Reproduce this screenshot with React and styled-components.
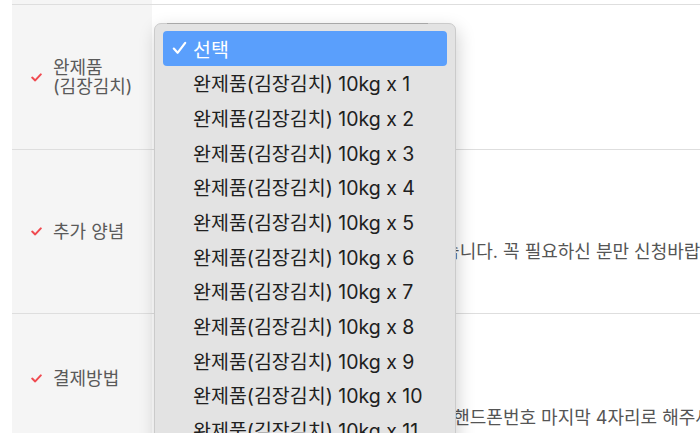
import React from "react";
import styled, { createGlobalStyle } from "styled-components";

const Global = createGlobalStyle`
  html, body { margin: 0; padding: 0; background: #fff; }
  body { font-family: Inter, "Noto Sans CJK KR", "Noto Sans", sans-serif; overflow: hidden; }
`;

const Page = styled.div`
  position: relative;
  width: 700px;
  height: 433px;
  overflow: hidden;
  padding-left: 12px;
  box-sizing: border-box;
`;

const Table = styled.div`
  display: flex;
  flex-direction: column;
`;

const Row = styled.div`
  display: grid;
  grid-template-columns: 140px 1fr;
  min-height: ${(p) => p.$h}px;
  border-bottom: 1px solid #dedede;
`;

const Label = styled.div`
  background: #f5f5f5;
  display: flex;
  align-items: center;
  gap: 11px;
  padding-left: 19px;
  font-size: 18px;
  line-height: 19px;
  color: #5a5a5a;
`;

const Content = styled.div`
  display: flex;
  flex-direction: column;
  gap: 8px;
  padding: ${(p) => p.$pt}px 16px 0 16px;
  white-space: nowrap;
`;

const SelectBox = styled.div`
  height: 34px;
  width: 280px;
  border: 1px solid #ccc;
  border-radius: 4px;
  box-sizing: border-box;
`;

const Note = styled.div`
  font-size: 18px;
  line-height: 24px;
  color: #555;
`;

const Popup = styled.div`
  position: absolute;
  left: 154px;
  top: 23px;
  width: 302px;
  height: 440px;
  box-sizing: border-box;
  background: #e3e3e3;
  border: 1px solid #cbcbcb;
  border-radius: 7px;
  box-shadow: 2px 6px 18px rgba(0, 0, 0, 0.18);
  padding: 7px 8px;
  &::before {
    content: "";
    position: absolute;
    left: 12px;
    right: 27px;
    top: -1px;
    height: 1px;
    background: #a8a8a8;
  }
`;

const Option = styled.div`
  display: flex;
  align-items: center;
  height: 34.67px;
  padding-left: 9px;
  border-radius: 4px;
  font-size: 19.5px;
  color: ${(p) => (p.$selected ? "#fff" : "#202020")};
  background: ${(p) => (p.$selected ? "#5a9ffc" : "transparent")};
`;

const CheckSlot = styled.span`
  width: 21px;
  display: flex;
  align-items: center;
`;

const RedCheck = () => (
  <svg width="11" height="9" viewBox="0 0 11 9">
    <path d="M1.2 4.6 L4.2 7.4 L9.8 1.4" fill="none" stroke="#f04a50" strokeWidth="2" strokeLinecap="round" strokeLinejoin="round" />
  </svg>
);

const WhiteCheck = () => (
  <svg width="15" height="14" viewBox="0 0 15 14">
    <path d="M1.8 7.6 L5.6 11.8 L13.2 1.8" fill="none" stroke="#fff" strokeWidth="2.2" strokeLinecap="round" strokeLinejoin="round" />
  </svg>
);

const options = Array.from({ length: 12 }, (_, i) => `완제품(김장김치) 10kg x ${i + 1}`);

export default function App() {
  return (
    <>
      <Global />
      <Page>
        <Table>
          <Row $h={4}>
            <Label />
            <Content $pt={0} />
          </Row>
          <Row $h={144}>
            <Label>
              <RedCheck />
              <span>
                완제품
                <br />
                (김장김치)
              </span>
            </Label>
            <Content $pt={36}>
              <SelectBox />
            </Content>
          </Row>
          <Row $h={163}>
            <Label>
              <RedCheck />
              <span>추가 양념</span>
            </Label>
            <Content $pt={48}>
              <SelectBox />
              <Note>추가양념은 한정수량으로 준비되어있습니다. 꼭 필요하신 분만 신청바랍니다.</Note>
            </Content>
          </Row>
          <Row $h={128}>
            <Label>
              <RedCheck />
              <span>결제방법</span>
            </Label>
            <Content $pt={50}>
              <SelectBox />
              <Note>무통장입금 시 입금자명은 주문자명과 핸드폰번호 마지막 4자리로 해주세요.</Note>
            </Content>
          </Row>
        </Table>
        <Popup>
          {["선택", ...options].map((t, i) => (
            <Option key={i} $selected={i === 0}>
              <CheckSlot>{i === 0 && <WhiteCheck />}</CheckSlot>
              {t}
            </Option>
          ))}
        </Popup>
      </Page>
    </>
  );
}
